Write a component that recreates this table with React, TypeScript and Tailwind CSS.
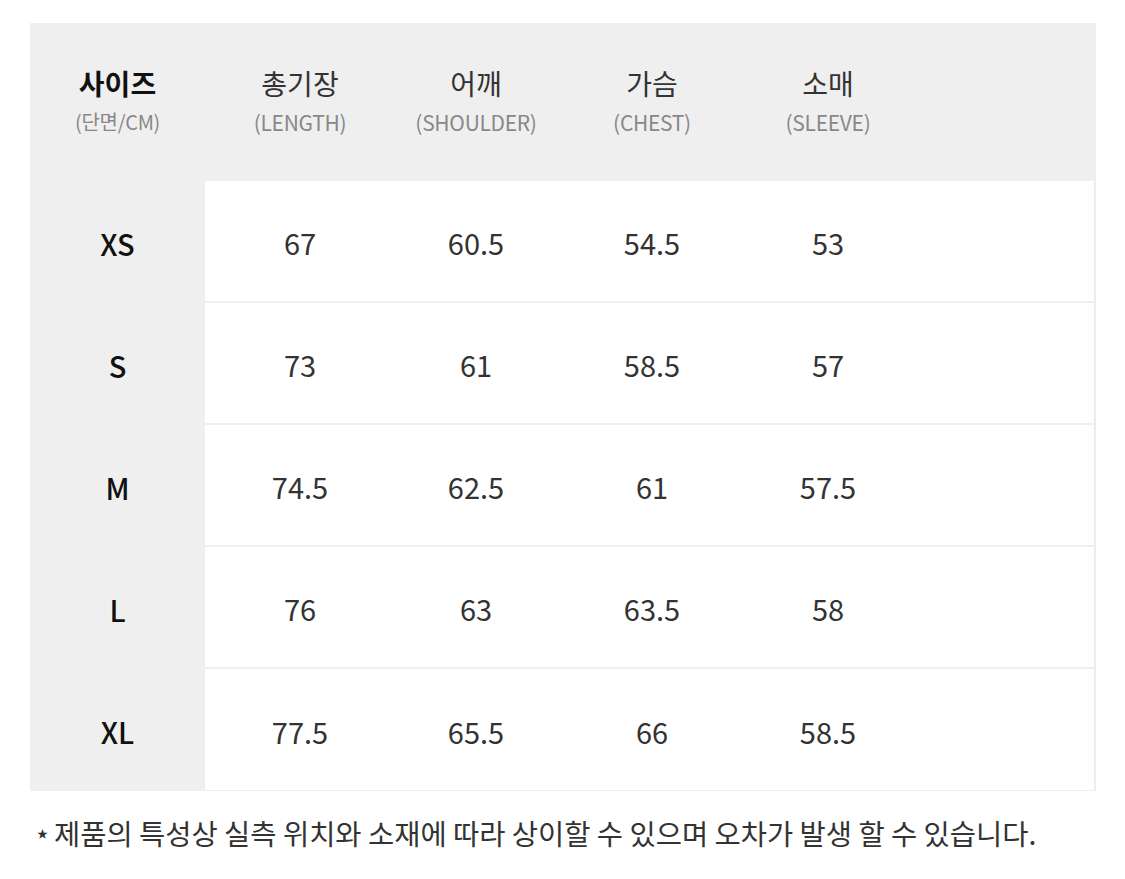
import React from "react";

const cols = [
  { k: "총기장", s: "(LENGTH)" },
  { k: "어깨", s: "(SHOULDER)" },
  { k: "가슴", s: "(CHEST)" },
  { k: "소매", s: "(SLEEVE)" },
];

const rows: [string, string[]][] = [
  ["XS", ["67", "60.5", "54.5", "53"]],
  ["S", ["73", "61", "58.5", "57"]],
  ["M", ["74.5", "62.5", "61", "57.5"]],
  ["L", ["76", "63", "63.5", "58"]],
  ["XL", ["77.5", "65.5", "66", "58.5"]],
];

export default function App() {
  return (
    <div
      className="w-[1125px] h-[879px] bg-white pt-[23px] pl-[30px]"
      style={{ fontFamily: '"Noto Sans CJK KR", "Noto Sans", sans-serif' }}
    >
      <div className="w-[1066px] bg-[#efefef]">
        <div className="flex h-[158px]">
          <div className="w-[175px] flex flex-col items-center pt-[42px]">
            <div className="text-[28px] leading-[36px] font-bold text-[#111]">사이즈</div>
            <div className="text-[20px] leading-[28px] text-[#888] mt-[7px] tracking-[-0.3px]">(단면/CM)</div>
          </div>
          <div className="flex pl-[7px]">
            {cols.map((c) => (
              <div key={c.k} className="w-[176px] flex flex-col items-center pt-[42px]">
                <div className="text-[28px] leading-[36px] text-[#333]">{c.k}</div>
                <div className="text-[21px] leading-[28px] text-[#888] mt-[7px] tracking-[-0.3px]">{c.s}</div>
              </div>
            ))}
          </div>
        </div>
        <div className="flex">
          <div className="w-[175px] flex flex-col">
            {rows.map(([size]) => (
              <div key={size} className="h-[122px] flex items-center justify-center pt-[4px] text-[29px] font-medium text-[#111]">
                {size}
              </div>
            ))}
          </div>
          <div className="w-[890px] bg-white flex flex-col border-r border-[#e9e9e9]">
            {rows.map(([size, vals], i) => (
              <div
                key={size}
                className={
                  i < rows.length - 1
                    ? "h-[122px] flex pl-[7px] border-b-2 border-[#efefef]"
                    : "h-[122px] flex pl-[7px] border-b border-[#efefef]"
                }
              >
                {vals.map((v, j) => (
                  <div key={j} className="w-[176px] flex items-center justify-center pt-[4px] text-[29px] text-[#333]">
                    {v}
                  </div>
                ))}
              </div>
            ))}
          </div>
        </div>
      </div>
      <div className="mt-[22px] pl-[7px] flex items-center text-[28.5px] leading-[40px] text-[#333]">
        <span className="text-[11px] mr-[6px] text-[#333]">★</span>
        <span>제품의 특성상 실측 위치와 소재에 따라 상이할 수 있으며 오차가 발생 할 수 있습니다.</span>
      </div>
    </div>
  );
}
